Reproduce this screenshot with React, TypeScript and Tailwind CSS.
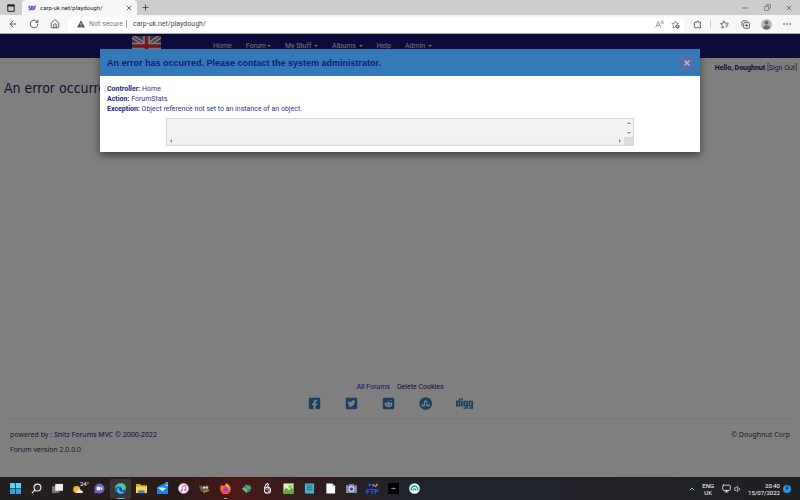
import type { ReactNode } from "react";
import {
  FaDigg,
  FaFacebookSquare,
  FaRedditSquare,
  FaStumbleuponCircle,
  FaTwitterSquare,
} from "react-icons/fa";
import {
  ArrowLeft,
  ChevronUp,
  Copy,
  House,
  Minus,
  Monitor,
  Plus,
  RotateCw,
  Volume1,
  X,
} from "lucide-react";

const ui = "font-['Roboto','Noto_Sans',sans-serif]";
const title = "font-['Liberation_Sans',Arial,sans-serif]";
const heading = "font-['DejaVu_Sans_Condensed','DejaVu_Sans',sans-serif]";
const wide = "font-['Noto_Sans','DejaVu_Sans',sans-serif]";

function IconButton({ label, children }: { label: string; children: ReactNode }) {
  return (
    <button type="button" aria-label={label} className="flex size-4 shrink-0 items-center justify-center text-[#444]">
      {children}
    </button>
  );
}

function TabStrip() {
  return (
    <div className="flex h-[15px] shrink-0 items-stretch bg-[#cdcdcd]">
      <div className="flex w-[22px] items-center justify-center">
        <button type="button" aria-label="Tab actions">
          <svg viewBox="0 0 8 8" className="size-2">
            <path d="M.8 1h6.4v6.3H.8z" fill="none" stroke="#222" />
            <path d="M.5.5h7v2h-7z" fill="#222" />
          </svg>
        </button>
      </div>
      <div className="flex w-[115px] items-center gap-1 rounded-t-sm bg-[#f7f7f7] pr-1 pl-[6px]">
        <svg viewBox="0 0 9 6" className="h-[6px] w-[8px] shrink-0" fill="none" stroke="#6d35b5" strokeWidth="1.1">
          <path d="M3 1H1v2h2v2H.5M4 5V1h1.500l.6 1-.6 1H4m1.500 0 .8 1-.6 1H4M7 5V1h2M7 3h1.500" />
        </svg>
        <span className="flex-1 text-[6px] leading-2 text-[#222]">carp-uk.net/playdough/</span>
        <button type="button" aria-label="Close tab" className="text-[#222]">
          <X className="size-2" />
        </button>
      </div>
      <button type="button" aria-label="New tab" className="flex w-4 items-center justify-center text-[#333]">
        <Plus className="size-[9px]" />
      </button>
      <div className="ml-auto flex items-center gap-[6px] pr-[3px]">
        <IconButton label="Minimise"><Minus className="size-2" /></IconButton>
        <IconButton label="Restore"><Copy className="size-[7px] -scale-x-100" /></IconButton>
        <IconButton label="Close"><X className="size-2" /></IconButton>
      </div>
    </div>
  );
}

function Toolbar() {
  return (
    <div className="flex h-[19px] shrink-0 items-center border-b border-[#aaa] bg-[#f7f7f7]">
      <div className="flex w-[68px] items-center gap-[5px] pl-[5px]">
        <IconButton label="Back"><ArrowLeft className="size-[10px]" /></IconButton>
        <IconButton label="Reload"><RotateCw className="size-[10px]" /></IconButton>
        <IconButton label="Home page"><House className="size-[10px]" /></IconButton>
      </div>
      <div className="flex h-[15px] flex-1 items-center rounded-sm bg-white pr-px pl-[9px]">
        <svg viewBox="0 0 8 8" className="size-2 shrink-0">
          <path d="M4 .3 8 7.500H0z" fill="#555" />
          <path d="M4 3v2.200M4 5.800v.8" stroke="#fff" strokeWidth=".8" />
        </svg>
        <span className="w-[41px] pl-[4px] text-[7px] leading-2 whitespace-nowrap text-[#767676]">Not secure</span>
        <label htmlFor="address" className="hidden">Address</label>
        <input
          id="address"
          defaultValue="carp-uk.net/playdough/"
          className="h-2 min-w-0 flex-1 border-l border-[#aaa] pl-[6px] text-[7px] leading-2 text-[#4a4a4a] outline-none"
        />
        <IconButton label="Read aloud">
          <svg viewBox="0 0 10 10" className="size-[9px]" fill="none" stroke="#888" strokeWidth=".9">
            <path d="M.8 8.500 3.600 1.500l2.800 7M1.800 6.200h3.600M6.800 1.200c.8.8.8 2 0 2.800M8.200.5c1.200 1.200 1.200 3 0 4.200" />
          </svg>
        </IconButton>
        <IconButton label="Add to favourites">
          <svg viewBox="0 0 10 10" className="size-[9px]" fill="none" stroke="#777" strokeWidth=".9">
            <path d="M8.800 4 6.200 3.600 5 1 3.800 3.600 1 4l2 2-.5 3 2-1" />
            <circle cx="7.200" cy="7.200" r="2.300" fill="#555" stroke="none" />
            <path d="M7.200 6v2.400M6 7.200h2.400" stroke="#fff" strokeWidth=".7" />
          </svg>
        </IconButton>
      </div>
      <div className="flex w-[116px] items-center justify-between px-[5px]">
        <IconButton label="Extensions">
          <svg viewBox="0 0 10 10" className="size-[9px]" fill="none" stroke="currentColor" strokeWidth="1">
            <path d="M2 2.500h2a1.200 1.200 0 0 1 2.400 0h2v2a1.200 1.200 0 0 0 0 2.200v2H6.200a1.200 1.200 0 0 0-2.200 0H2.500L1.500 7V4z" />
          </svg>
        </IconButton>
        <span className="h-2 border-l border-[#ccc]" />
        <IconButton label="Favourites">
          <svg viewBox="0 0 10 10" className="size-[9px]" fill="none" stroke="currentColor" strokeWidth=".9">
            <path d="M6.800 3.600H5.700L4.300 1 3.200 3.600.7 4l1.900 2-.5 3 2.500-1.300M7 3.600h2.600M6.200 5.500h3M6.200 7.400h2" />
          </svg>
        </IconButton>
        <IconButton label="Collections">
          <svg viewBox="0 0 10 10" className="size-[9px]" fill="none" stroke="currentColor" strokeWidth=".9">
            <rect x="3" y="3" width="6.400" height="6.200" rx="1" />
            <path d="M1.800 7.200 1 6V2l1-1h5l.8.8M6.200 4.500v3.200M4.600 6.100h3.200" />
          </svg>
        </IconButton>
        <IconButton label="Profile">
          <svg viewBox="0 0 12 12" className="size-[11px]">
            <circle cx="6" cy="6" r="6" fill="#bdb9b7" />
            <circle cx="6" cy="4.200" r="2.200" fill="#6d6865" />
            <path d="M2.200 9.800c0-4 7.600-4 7.600 0A6 6 0 0 1 2.200 9.800" fill="#6d6865" />
          </svg>
        </IconButton>
        <IconButton label="Settings and more">
          <svg viewBox="0 0 8 8" className="size-2" fill="currentColor">
            <circle cx="1" cy="4" r=".8" /><circle cx="4" cy="4" r=".8" /><circle cx="7" cy="4" r=".8" />
          </svg>
        </IconButton>
      </div>
    </div>
  );
}

function Flag() {
  return (
    <svg viewBox="0 0 58 40" className="h-5 w-[29px]" aria-label="English">
      <path d="M0 0h58v40H0z" fill="#4a78a8" />
      <path d="m0 0 58 40M58 0 0 40" stroke="#fff" strokeWidth="9" />
      <path d="m0 0 58 40M58 0 0 40" stroke="#e05060" strokeWidth="3" />
      <path d="M29 0v40M0 20h58" stroke="#fff" strokeWidth="13" />
      <path d="M29 0v40M0 20h58" stroke="#e83040" strokeWidth="7" />
    </svg>
  );
}

function Caret() {
  return <span className="ml-px inline-block border-x-2 border-t-2 border-x-transparent border-t-current align-middle" />;
}

function SiteNav() {
  return (
    <nav className="flex h-6 shrink-0 items-center bg-[#1a1a76] pl-[132px] text-[7px] leading-2 text-[#e8e8f8]">
      <Flag />
      <div className="flex items-center gap-[14px] pl-[52px]">
        <a href="#home">Home</a>
        <button type="button">Forum<Caret /></button>
        <button type="button">My Stuff <Caret /></button>
        <button type="button">Albums <Caret /></button>
        <a href="#help">Help</a>
        <button type="button">Admin <Caret /></button>
      </div>
    </nav>
  );
}

function SiteFooter() {
  return (
    <footer className="mt-auto px-[10px] pb-5 text-[7px] leading-[15px] text-[#33335a]">
      <div className="flex justify-center gap-[7px] leading-[10px]">
        <a href="#forums" className="text-[#2626b4]">All Forums</a>
        <a href="#cookies" className="text-[#191970]">Delete Cookies</a>
      </div>
      <div className="mb-1 flex h-[22px] items-center justify-center gap-[24px] pr-[20px] text-[#337fc0]">
        <a href="#facebook" aria-label="Facebook"><FaFacebookSquare className="size-[13px]" /></a>
        <a href="#twitter" aria-label="Twitter"><FaTwitterSquare className="size-[13px]" /></a>
        <a href="#reddit" aria-label="Reddit"><FaRedditSquare className="size-[13px]" /></a>
        <a href="#stumbleupon" aria-label="StumbleUpon"><FaStumbleuponCircle className="size-[13px]" /></a>
        <a href="#digg" aria-label="Digg"><FaDigg className="size-[17px]" /></a>
      </div>
      <div className={wide}>
        <div className="flex justify-between border-t border-[#eee] pt-2">
          <p>powered by : <a href="#snitz" className="text-[#191970]">Snitz Forums MVC © 2000-2022</a></p>
          <p>© Doughnut Corp</p>
        </div>
        <p>Forum version 2.0.0.0</p>
      </div>
    </footer>
  );
}

function ErrorDialog() {
  return (
    <div
      role="dialog"
      aria-labelledby="error-title"
      className="mt-[15px] w-3/4 bg-white text-[#333399] shadow-[0_3px_8px_rgba(0,0,0,0.5)]"
    >
      <div className="flex h-[27px] items-center justify-between bg-[#337ab7] px-[7px]">
        <h2 id="error-title" className={`text-[9px] leading-3 font-bold text-[#191980] ${title}`}>
          An error has occurred. Please contact the system administrator.
        </h2>
        <button type="button" aria-label="Close" className="flex h-[13px] w-3 items-center justify-center rounded-xs bg-[#6567a3] text-[#9fbce4]">
          <X className="size-2" strokeWidth={5} />
        </button>
      </div>
      <div className="px-[7px] pt-2 pb-[6px] text-[7px] leading-[10px]">
        <p><b className="text-[#26268a]">Controller:</b> Home</p>
        <p><b className="text-[#26268a]">Action:</b> ForumStats</p>
        <p><b className="text-[#26268a]">Exception:</b> Object reference not set to an instance of an object.</p>
        <div className="mx-auto mt-1 grid h-7 w-4/5 grid-cols-[1fr_9px] grid-rows-[1fr_8px] border border-[#d8d8d8] bg-[#f3f3f3]">
          <textarea aria-label="Stack trace" readOnly className="size-full resize-none overflow-hidden outline-none" />
          <div className="flex flex-col items-center justify-between py-[3px] text-[#888]">
            <span className="border-x-2 border-b-2 border-x-transparent border-b-current" />
            <span className="border-x-2 border-t-2 border-x-transparent border-t-current" />
          </div>
          <div className="flex items-center justify-between bg-[#efefef] px-[3px] text-[#888]">
            <span className="border-y-2 border-r-2 border-y-transparent border-r-current" />
            <span className="border-y-2 border-l-2 border-y-transparent border-l-current" />
          </div>
          <div className="bg-[#dcdcdc]" />
        </div>
      </div>
    </div>
  );
}

const apps: { name: string; art: ReactNode }[] = [
  { name: "Start", art: <><path d="M0 0h5.600v5.600H0zM6.400 0H12v5.600H6.400z" fill="#5cd0fa" /><path d="M0 6.400h5.600V12H0zM6.400 6.400H12V12H6.400z" fill="#2ba4ee" /></> },
  { name: "Search", art: <><circle cx="7" cy="5" r="3.800" fill="#333" stroke="#eee" strokeWidth="1.200" /><path d="M4.200 7.800 1 11" stroke="#eee" strokeWidth="1.400" /></> },
  { name: "Task view", art: <><path d="M0 3.500h8V11H0z" fill="#777" /><path d="M3.500 1H12v7.500H3.500z" fill="#eee" /></> },
  { name: "Weather", art: <><circle cx="4" cy="7" r="3.800" fill="#ffb52b" /><path d="M5 11c-2 0-2-2.600.2-2.600 1-2 3.500-1.600 4 0 2.200 0 2.200 2.600.2 2.600z" fill="#e4edf7" /></> },
  { name: "Chat", art: <><circle cx="6" cy="6" r="5.500" fill="#6264c9" /><path d="M.5 11.500 1 7l3 4z" fill="#6264c9" /><path d="M3 4h4v4H3zM7.500 5.500 9 4v4L7.500 6.500z" fill="#fff" /></> },
  { name: "Edge", art: <><circle cx="6" cy="6" r="6" fill="#0c72cf" /><path d="M0 5.500C.8-1.500 11.500-1.500 12 5c.2 3-3.500 3.500-4.800 2.500C9 5.500 5 1.500 0 5.500" fill="#43cf9c" /><path d="M4.200 6c-.5 3 3 5 6.300 3.500C8 12.500 3 12 2.500 8.500 2.300 6.500 4 5 4.200 6" fill="#54bdf0" /><path d="M5 5.500c1.500-1 3 .5 2 2 .7.800 2.500.8 3.700.2-1.700 2.700-6 1-5.700-2.200" fill="#17324c" /></> },
  { name: "File Explorer", art: <><path d="M0 1h4.500l1 1.500H12V11H0z" fill="#e9a820" /><path d="M0 4h12v7H0z" fill="#ffd45a" /><path d="M2.500 8h7v3h-7z" fill="#3187d2" /></> },
  { name: "Mail", art: <><path d="M0 4.500 6 1l6 3.500V12H0z" fill="#1687d9" /><path d="M1 5h10L6 9z" fill="#e8f7ff" /><circle cx="9.500" cy="2.800" r="2.800" fill="#168df3" /></> },
  { name: "iTunes", art: <><circle cx="6" cy="6" r="5.500" fill="#f7f5fb" stroke="#ba99df" strokeWidth=".7" /><path d="M4.500 8.500V3.500l4-1v5" stroke="#e8488b" fill="none" /><circle cx="3.800" cy="8.500" r="1.100" fill="#b65be0" /><circle cx="7.800" cy="7.600" r="1.100" fill="#e8488b" /></> },
  { name: "GIMP", art: <><path d="M.5 2c2 2.500 4 1 6 1.500C9 1 11 3 10.500 6s-3 5-6 4S0 6 .5 2" fill="#685c4d" /><circle cx="5.500" cy="5" r="1.300" fill="#ddd" /><circle cx="8.500" cy="5" r="1.300" fill="#ddd" /><path d="m5 10 6-2" stroke="#d88b34" strokeWidth="1.300" /></> },
  { name: "Firefox", art: <><path d="M6.500.2C9 1 12 3.500 11.700 7A5.700 5.700 0 0 1 .3 6.500C.3 4 1 2.300 2 1.500l1 1.700L5 3z" fill="#ff7130" /><path d="M7 .2c1 2 4 3.200 4 6.800-.5-2-2-3-3-3.200-1-.8-1.500-2-1-3.600" fill="#ffd139" /><circle cx="6" cy="6.800" r="2.500" fill="#8b43c7" /><path d="M.8 6.500c1.200 5 7.500 5 9 1.500" stroke="#f5345b" strokeWidth="1.400" fill="none" /></> },
  { name: "Maps", art: <><path d="m1 6 4-4 6 3-1 4-4 2z" fill="#2576cd" /><path d="m5 2 5 1 1 3-4 1z" fill="#56ad42" /><path d="m1 6 3-1 3 3-1 3z" fill="#91ba34" /></> },
  { name: "Flame", art: <><path d="M6.500 0c-3 2-4 4-3.500 6M7.500 1c-1 1-1.500 2-1 3" fill="none" stroke="#eee" strokeWidth="1.200" /><circle cx="6" cy="7.800" r="3.300" fill="none" stroke="#eee" strokeWidth="1.200" /><path d="M6 6c3 0 2 4 0 4M4.500 6l1.500 2" stroke="#eee" fill="none" /></> },
  { name: "Image editor", art: <><path d="M.5.5h11v11H.5z" fill="#e9efcf" /><path d="m.5 9 3-4 3 3 3-3 2 3v3.500H.5z" fill="#67ad35" /><path d="M6 2h4v4H6z" fill="#9ccb71" /></> },
  { name: "Notepad", art: <><path d="M1 .5h10v11H1z" fill="#4faec4" /><path d="M3 3h6M3 5.200h6M3 7.400h6" stroke="#1f6980" /></> },
  { name: "Document", art: <><path d="M1.500.5h6.500l3 3v8H1.500z" fill="#fff" /><path d="M8 .5v3h3z" fill="#bbb" /></> },
  { name: "Camera", art: <><path d="M0 2.500h3l1-1.500h4l1 1.500h3V11H0z" fill="#7f8aa5" /><circle cx="6" cy="6.500" r="3.100" fill="#d5dcf0" /><circle cx="6" cy="6.500" r="2" fill="#334e8b" /></> },
  { name: "FTP", art: <><circle cx="3" cy="2" r="1.500" fill="#3156ff" /><circle cx="7" cy="2.500" r="1.300" fill="#6b8cff" /><path d="m9 4 2.500-3" stroke="#d7a33a" strokeWidth="1.600" /></> },
  { name: "Terminal", art: <><path d="M0 0h12v12H0z" fill="#000" /><path d="M3.500 6h5M6 5v2" stroke="#aaa" strokeWidth=".8" /></> },
  { name: "Privacy guard", art: <><circle cx="6" cy="6" r="5.800" fill="#e6fbf7" /><path d="M2.300 8c0-6 7.400-6 7.400 0M4.300 8.500c0-3 3.400-3 3.400 0" fill="none" stroke="#1a8a80" strokeWidth="1.300" /></> },
];

function Taskbar() {
  return (
    <div className="flex h-[23px] shrink-0 items-center bg-[linear-gradient(90deg,#202020_0,#2a1b18_22%,#4a1918_30%,#321c1d_38%,#20232a_50%,#20232a_65%,#202022_100%)] pl-[5px] text-white">
      {apps.map((app) => (
        <button
          key={app.name}
          type="button"
          aria-label={app.name}
          className={
            app.name === "Edge"
              ? "relative flex h-5 w-[21px] items-center justify-center rounded-xs bg-white/10"
              : "relative flex h-5 w-[21px] items-center justify-center"
          }
        >
          <svg viewBox="0 0 12 12" className="size-[11px]">{app.art}</svg>
          {app.name === "Edge" && <span className="absolute bottom-0 h-px w-2 rounded bg-[#4cb5f5]" />}
          {app.name === "Firefox" && <span className="absolute bottom-0 h-px w-[3px] bg-[#999]" />}
          {app.name === "Weather" && <span className="absolute top-[2px] right-0 text-[6px] leading-none">24°</span>}
          {app.name === "Mail" && <span className="absolute top-[3px] right-[5px] text-[5px] leading-none">2</span>}
          {app.name === "FTP" && <span className="absolute bottom-[3px] text-[7px] leading-none font-bold text-[#3156ff]">FTP</span>}
        </button>
      ))}
      <div className="ml-auto flex items-center pr-[9px] text-[6px] leading-[7px]">
        <ChevronUp className="mr-[6px] size-2" />
        <div className="mr-2 text-center">ENG<br />UK</div>
        <Monitor className="mr-[3px] size-[9px]" />
        <Volume1 className="mr-[6px] size-2" />
        <div className="mr-[3px] text-right">20:40<br />15/07/2022</div>
        <span className="flex size-2 items-center justify-center rounded-full bg-[#2196f3] text-[5px] leading-none text-black">4</span>
      </div>
    </div>
  );
}

export default function App() {
  return (
    <div className={`flex h-screen flex-col overflow-hidden ${ui}`}>
      <TabStrip />
      <Toolbar />
      <div className="relative flex min-h-0 flex-1 flex-col bg-white">
        <SiteNav />
        <main>
          <p className="pt-1 pr-[3px] text-right text-[7px] leading-[12px] text-[#191970]">
            <b>Hello, Doughnut</b> <a href="#signout" className="text-[#33335a]">[Sign Out]</a>
          </p>
          <h1 className={`pl-1 text-[14px] leading-7 text-[#26265c] ${heading}`}>An error occurred</h1>
        </main>
        <SiteFooter />
        <div className="absolute inset-0 flex items-start justify-center bg-black/50">
          <ErrorDialog />
        </div>
      </div>
      <Taskbar />
    </div>
  );
}
